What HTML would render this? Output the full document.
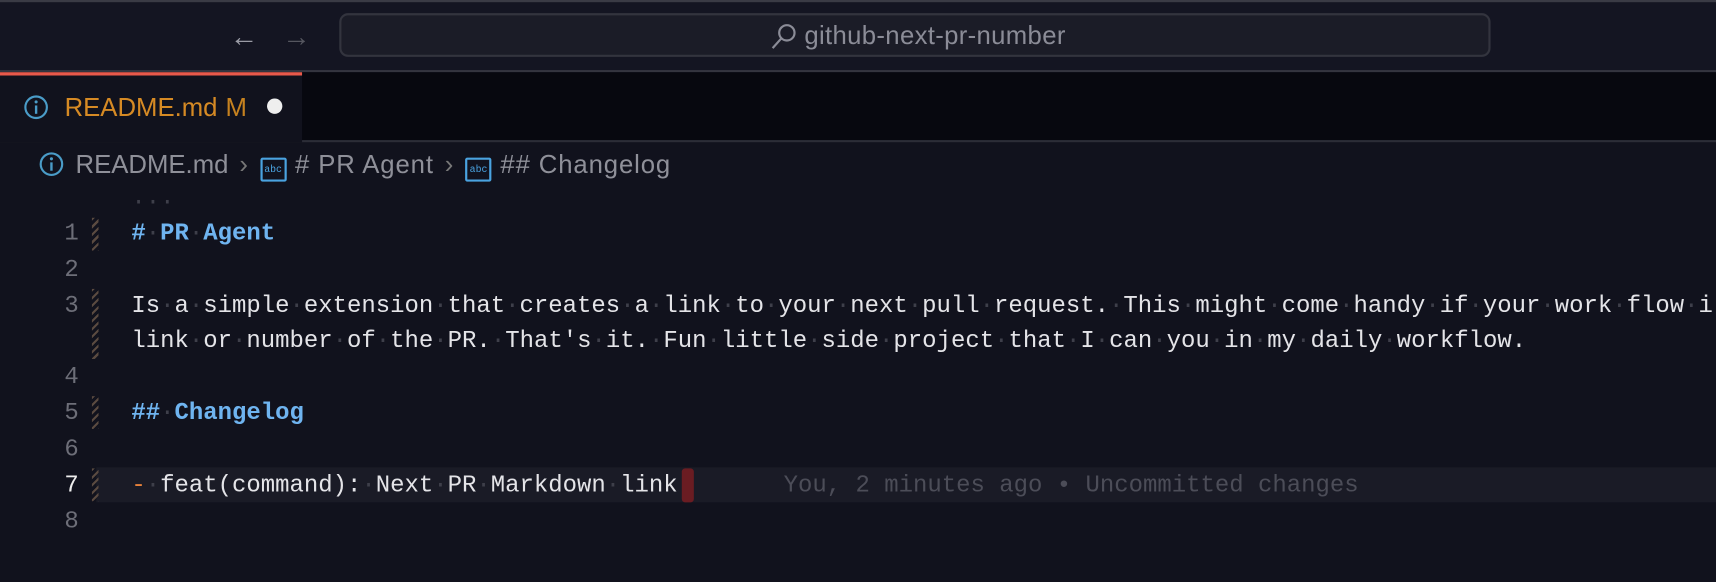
<!DOCTYPE html>
<html><head><meta charset="utf-8"><style>
html,body{margin:0;padding:0}
body{width:1716px;height:582px;background:#11121d;overflow:hidden;position:relative;font-family:"Liberation Sans",sans-serif}
#w{position:absolute;left:0;top:0;width:1568px;height:532px;transform:scale(1.09439);transform-origin:0 0}
.title{position:absolute;left:0;top:0;width:1568px;height:66px;background:#141522;border-top:2px solid #3a3b45;border-bottom:2px solid #34353f;box-sizing:border-box}
.search{position:absolute;left:310px;top:12px;width:1052px;height:40px;border:2px solid #33343e;border-radius:8px;background:#1b1c27;box-sizing:border-box}
.stext{position:absolute;left:735px;top:19px;font-size:23.5px;color:#8b8c97;letter-spacing:0.3px}
.tabbar{position:absolute;left:0;top:66px;width:1568px;height:62px;background:#07080f;border-bottom:2px solid #2c2d37}
.tab{position:absolute;left:0;top:66px;width:276px;height:64px;background:#11121d;border-top:3px solid #e8594b;box-sizing:border-box}
.bc{position:absolute;top:137px;font-size:23.5px;color:#8f9099;white-space:nowrap}
.ln{position:absolute;width:72px;text-align:right;color:#6d6e78;font-family:"Liberation Mono",monospace;font-size:21.9px}
.l{position:absolute;left:120px;color:#e4e4e8;white-space:pre;font-family:"Liberation Mono",monospace;font-size:21.9px}
.d{color:#3e3f4a}
.h{color:#6fb4f0;font-weight:bold}
.hatch{position:absolute;left:84px;width:6px;background:repeating-linear-gradient(135deg,#5a4a40 0 2px,transparent 2px 5px)}
.abc{display:inline-block;width:20px;height:18px;border:2px solid #4aa3e0;border-radius:2px;font-size:9px;color:#4aa3e0;text-align:center;line-height:18px;vertical-align:1px;margin:0 8px 0 0;font-family:"Liberation Mono",monospace;letter-spacing:0}
.ch{color:#777;margin:0 11px 0 10px}
.bt{letter-spacing:0.8px}
</style></head><body><div id="w">
<div class="title"></div>
<div style="position:absolute;left:210px;top:18px;font-size:26px;color:#9a9ba5">&#8592;</div>
<div style="position:absolute;left:258px;top:18px;font-size:26px;color:#55565f">&#8594;</div>
<div class="search"></div>
<svg style="position:absolute;left:703px;top:20px" width="26" height="26" viewBox="0 0 26 26"><circle cx="16" cy="10" r="7" fill="none" stroke="#8b8c97" stroke-width="2"/><line x1="11" y1="15" x2="3" y2="24" stroke="#8b8c97" stroke-width="2"/></svg>
<div class="stext">github-next-pr-number</div>
<div class="tabbar"></div>
<div class="tab"></div>
<svg style="position:absolute;left:21px;top:86px" width="24" height="24" viewBox="0 0 22 22"><circle cx="11" cy="11" r="9" fill="none" stroke="#4a9cc8" stroke-width="1.8"/><circle cx="11" cy="6.5" r="1.3" fill="#4a9cc8"/><rect x="10" y="9.5" width="2" height="7" fill="#4a9cc8"/></svg>
<div style="position:absolute;left:59px;top:85px;font-size:23.5px;color:#d68a24">README.md</div>
<div style="position:absolute;left:206px;top:85px;font-size:23.5px;color:#c6821f">M</div>
<div style="position:absolute;left:244px;top:90px;width:14px;height:14px;border-radius:50%;background:#eee"></div>
<svg style="position:absolute;left:35px;top:138px" width="24" height="24" viewBox="0 0 22 22"><circle cx="11" cy="11" r="9" fill="none" stroke="#4a9cc8" stroke-width="1.8"/><circle cx="11" cy="6.5" r="1.3" fill="#4a9cc8"/><rect x="10" y="9.5" width="2" height="7" fill="#4a9cc8"/></svg>
<div class="bc" style="left:69px">README.md<span class="ch">&#8250;</span><span class="abc">abc</span><span class="bt"># PR Agent</span><span class="ch">&#8250;</span><span class="abc">abc</span><span class="bt">## Changelog</span></div>
<div class="l d" style="top:168px">...</div>
<div style="position:absolute;left:88px;top:427px;width:1480px;height:32px;background:#1a1b26"></div>
<div class="hatch" style="top:199px;height:30px"></div>
<div class="hatch" style="top:264px;height:64px"></div>
<div class="hatch" style="top:362px;height:30px"></div>
<div class="hatch" style="top:428px;height:30px"></div>
<div class="ln" style="top:201px">1</div>
<div class="ln" style="top:234px">2</div>
<div class="ln" style="top:267px">3</div>
<div class="ln" style="top:332px">4</div>
<div class="ln" style="top:365px">5</div>
<div class="ln" style="top:398px">6</div>
<div class="ln" style="top:431px;color:#eee">7</div>
<div class="ln" style="top:464px">8</div>
<div class="l ws h" style="top:201px"># PR Agent</div>
<div class="l ws" style="top:267px">Is a simple extension that creates a link to your next pull request. This might come handy if your work flow i</div>
<div class="l ws" style="top:299px">link or number of the PR. That's it. Fun little side project that I can you in my daily workflow.</div>
<div class="l ws h" style="top:365px">## Changelog</div>
<div class="l ws" style="top:431px"><span style="color:#e8823a">-</span> feat(command): Next PR Markdown link</div>
<div style="position:absolute;left:623px;top:428px;width:11px;height:31px;background:#6a1c22;border-radius:3px"></div>
<div class="l" style="left:716px;top:431px;color:#4c4d58">You, 2 minutes ago • Uncommitted changes</div>
</div>
<script>
document.querySelectorAll('.ws').forEach(function(e){
 function walk(n){ if(n.nodeType==3){ var p=n.textContent.split(' '); if(p.length<2)return; var f=document.createDocumentFragment(); p.forEach(function(s,i){ if(i){var d=document.createElement('span');d.className='d';d.style.fontWeight='normal';d.textContent='·';f.appendChild(d);} f.appendChild(document.createTextNode(s));}); n.parentNode.replaceChild(f,n);} else Array.from(n.childNodes).forEach(walk);}
 walk(e);
});
</script>
</body></html>
